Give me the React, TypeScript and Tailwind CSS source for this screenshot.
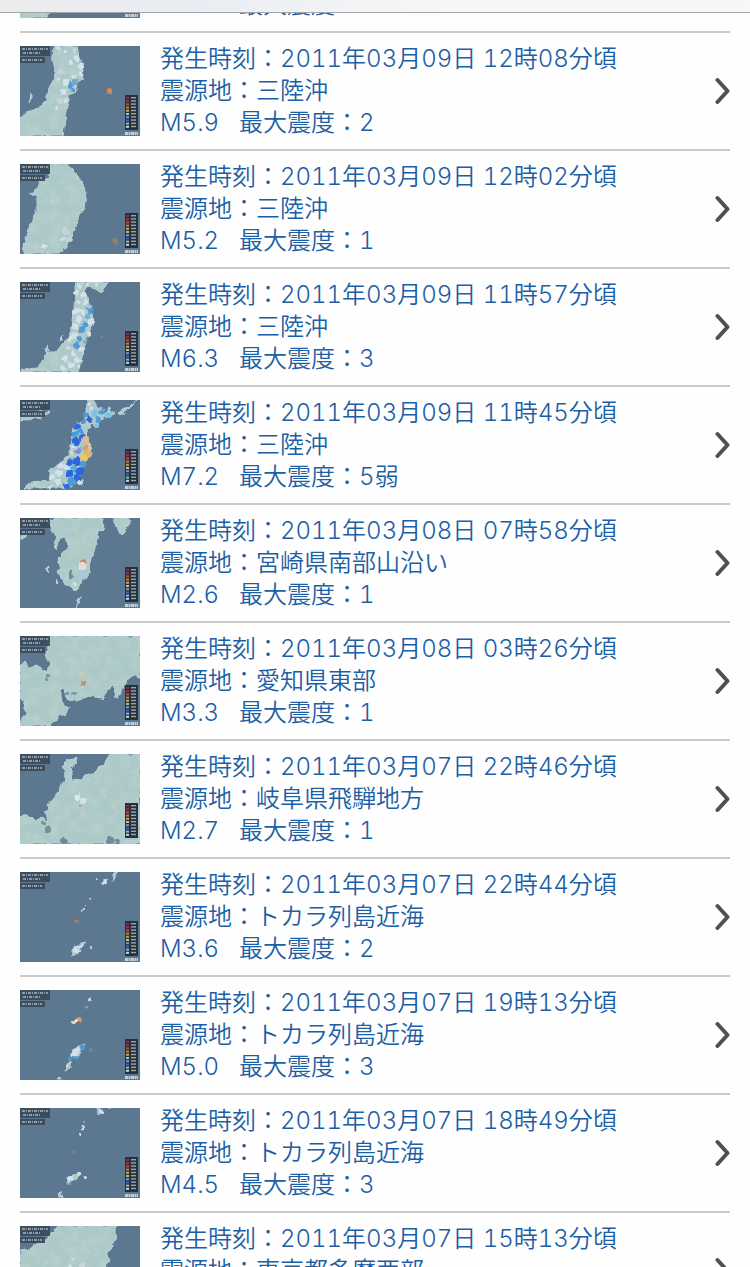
type Dot = [x: number, y: number, r: number, fill: string];

type Quake = {
    time: string;
    place: string;
    magnitude: string;
    intensity: string;
    land: string;
    dots: Dot[];
};

const PALE = "#d3e2ec";
const BLUE = "#4b9bd8";
const DEEP = "#2f66e0";
const SEA = "#7ba6c4";
const ORANGE = "#cf8a60";

const quakes: Quake[] = [
    {
        time: "2011年03月09日 12時19分頃",
        place: "三陸沖",
        magnitude: "M5.3",
        intensity: "1",
        land: "M40 0H64L66 20L56 46L44 62L32 76L26 90H0V70L20 58L32 40L36 18Z",
        dots: [[90, 48, 2, ORANGE]],
    },
    {
        time: "2011年03月09日 12時08分頃",
        place: "三陸沖",
        magnitude: "M5.9",
        intensity: "2",
        land: "M33 0H58L60 11L64 22L62 33L57 37L55 47L48 49L48 60L45 74L43 90H0V72L12 64L22 61L28 49L32 37L35 27L32 14Z M10 48L12 47L12 53L9 56Z",
        dots: [
            [38, 3, 2, PALE], [46, 6, 2, PALE], [54, 4, 2, PALE], [57, 12, 3, PALE], [50, 17, 2, PALE],
            [61, 20, 3, PALE], [60, 28, 3, PALE], [54, 30, 2, PALE], [41, 26, 3, "#c6d3d8"], [38, 34, 2, PALE],
            [46, 36, 3, PALE], [44, 46, 3, PALE], [40, 55, 3, "#c6d3d8"], [36, 62, 2, PALE], [45, 54, 2, PALE],
            [51, 39, 3, BLUE], [55, 36, 3, SEA], [53, 44, 2, BLUE], [89, 46, 3, ORANGE],
        ],
    },
    {
        time: "2011年03月09日 12時02分頃",
        place: "三陸沖",
        magnitude: "M5.2",
        intensity: "1",
        land: "M28 0H45L50 3L60 13L66 26L65 39L60 51L57 59L53 71L48 81L40 90H3L5 76L12 59L17 46L17 33L8 29L15 28L20 16L28 13Z",
        dots: [
            [46, 67, 4, "#c2d4d8"], [49, 76, 3, "#c2d4d8"], [43, 75, 2, PALE], [24, 82, 2, PALE],
            [32, 38, 1, PALE], [95, 77, 3, "#94806f"],
        ],
    },
    {
        time: "2011年03月09日 11時57分頃",
        place: "三陸沖",
        magnitude: "M6.3",
        intensity: "3",
        land: "M55 0H88L84 5L80 10L70 5L66 4L64 10L69 18L72 30L73 42L68 55L64 64L62 75L60 90H0L2 87L18 86L22 78L28 70L36 70L44 60L50 52L53 40L54 25L55 10Z M25 66L28 63L29 68L26 70Z M39 57L42 54L41 59Z",
        dots: [
            [60, 4, 2, PALE], [66, 2, 2, PALE], [76, 3, 2, PALE], [57, 10, 3, PALE], [64, 13, 3, PALE],
            [58, 20, 2, PALE], [66, 21, 3, PALE], [56, 29, 3, PALE], [62, 30, 3, PALE], [70, 28, 3, BLUE],
            [67, 34, 3, "#73b0cf"], [59, 37, 3, PALE], [55, 44, 3, PALE], [71, 40, 3, PALE], [65, 43, 3, BLUE],
            [61, 48, 3, BLUE], [69, 51, 2, PALE], [56, 54, 3, PALE], [50, 57, 3, PALE], [59, 57, 3, BLUE],
            [65, 60, 2, SEA], [57, 64, 3, BLUE], [49, 65, 2, PALE], [61, 67, 3, PALE], [53, 72, 3, PALE],
            [45, 76, 3, PALE], [57, 78, 3, PALE], [51, 83, 3, PALE], [43, 86, 2, PALE], [59, 85, 2, PALE],
            [82, 55, 1, "#8a8f99"],
        ],
    },
    {
        time: "2011年03月09日 11時45分頃",
        place: "三陸沖",
        magnitude: "M7.2",
        intensity: "5弱",
        land: "M66 0H73L76 6L82 9L90 8L94 14L86 18L80 22L76 28L70 22L66 34L71 45L68 58L62 65L60 80L50 88H4L12 82L30 80L30 69L36 66L42 62L50 50L52 40L54 26L66 18Z M98 13L118 0L112 6L100 15Z M0 14L29 11L20 18L0 21Z",
        dots: [
            [69, 4, 2, PALE], [72, 9, 2, PALE], [82, 12, 3, BLUE], [86, 10, 2, DEEP], [89, 15, 3, "#74c5ea"],
            [75, 14, 3, "#74c5ea"], [66, 15, 3, BLUE], [70, 19, 3, DEEP], [78, 20, 3, BLUE], [64, 22, 3, BLUE],
            [76, 26, 2, "#74c5ea"], [57, 27, 3, DEEP], [60, 31, 3, BLUE], [55, 34, 3, BLUE], [62, 37, 3, DEEP],
            [56, 41, 4, DEEP], [66, 40, 4, "#d8bd9a"], [69, 47, 4, "#dfc3a8"], [65, 48, 3, "#d9a06c"], [68, 54, 4, "#e0b56a"],
            [64, 57, 4, "#e6cc62"], [59, 51, 3, "#7c8edb"], [54, 47, 2, PALE], [52, 54, 2, PALE], [57, 61, 4, DEEP],
            [50, 62, 3, DEEP], [63, 64, 3, BLUE], [47, 67, 3, PALE], [54, 69, 4, "#58aede"], [60, 71, 4, DEEP],
            [49, 74, 4, DEEP], [57, 78, 4, DEEP], [52, 82, 4, BLUE], [47, 86, 3, DEEP], [60, 83, 3, PALE],
            [41, 66, 3, PALE], [39, 73, 3, PALE], [32, 77, 3, PALE], [38, 82, 3, PALE], [30, 87, 2, PALE],
            [77, 59, 1, "#74854a"],
        ],
    },
    {
        time: "2011年03月08日 07時58分頃",
        place: "宮崎県南部山沿い",
        magnitude: "M2.6",
        intensity: "1",
        land: "M28 5L33 0H82L83 12L78 16L75 30L70 48L68 58L62 62L58 70L53 74L50 68L44 64L38 56L40 48L38 40L44 34L48 28L46 18L40 22L36 32L34 26L36 16L32 14Z M94 0H111L106 10L102 18L96 10Z M57 90L57 82L60 78L60 84Z M0 18L7 17L4 21L0 21Z M26 52L29 50L28 54Z M36 61L38 65L36 66Z",
        dots: [
            [50, 55, 2, "#668aa0"], [51, 59, 2, "#668aa0"], [62, 48, 4, "#dbe0dc"], [63, 43, 2, ORANGE], [65, 46, 2, "#e5b282"],
            [64, 57, 4, "#a8c8d9"], [55, 66, 2, PALE],
        ],
    },
    {
        time: "2011年03月08日 03時26分頃",
        place: "愛知県東部",
        magnitude: "M3.3",
        intensity: "1",
        land: "M28 0H120V42L112 40L107 44L104 52L98 62L94 60L96 52L91 49L88 54L82 62L70 60L56 64L46 62L44 52L40 54L42 66L48 72L46 78L38 80L32 88L30 90H0V86L6 78L4 66L0 60V30L4 26L8 32L18 30L28 36L30 26L26 18Z",
        dots: [
            [29, 40, 2, "#7390a0"], [27, 44, 2, "#7390a0"], [62, 38, 3, "#c8c7be"], [61, 50, 3, "#bfcbc8"],
            [63, 48, 2, ORANGE], [47, 57, 2, "#7893a4"], [54, 58, 2, "#7893a4"],
        ],
    },
    {
        time: "2011年03月07日 22時46分頃",
        place: "岐阜県飛騨地方",
        magnitude: "M2.7",
        intensity: "1",
        land: "M91 0H120V90H0V62L8 60L14 66L24 64L28 68L26 58L30 48L38 38L44 28L46 20L42 12L48 6L58 4L56 10L50 14L52 25L62 26L66 21L76 18L84 8Z",
        dots: [
            [28, 75, 3, "#7390a0"], [24, 70, 2, "#7390a0"], [44, 87, 3, "#6d8b9c"], [90, 86, 4, "#6d8b9c"],
            [97, 88, 3, "#6d8b9c"], [58, 43, 3, "#e4eaec"], [63, 47, 3, PALE], [61, 52, 1, ORANGE], [60, 39, 1, PALE],
        ],
    },
    {
        time: "2011年03月07日 22時44分頃",
        place: "トカラ列島近海",
        magnitude: "M3.6",
        intensity: "2",
        land: "M51 83L53 76L60 72L66 71L61 76L57 83Z M93 9L95 0H98L96 7Z",
        dots: [
            [84, 10, 3, PALE], [77, 7, 1, PALE], [69, 26, 1, PALE], [65, 33, 1, PALE], [63, 38, 1, PALE],
            [57, 49, 2, "#a17d70"], [56, 78, 3, PALE], [60, 74, 2, PALE], [71, 75, 1, PALE],
        ],
    },
    {
        time: "2011年03月07日 19時13分頃",
        place: "トカラ列島近海",
        magnitude: "M5.0",
        intensity: "3",
        land: "M51 66L53 60L60 56L66 53L61 61L57 68Z M45 81L46 74L50 72L50 79Z M38 90L41 87L42 90Z",
        dots: [
            [70, 10, 2, PALE], [66, 18, 1, "#85a9c5"], [54, 32, 2, "#ead9cb"], [58, 30, 3, "#db9869"], [56, 31, 1, "#fff"],
            [63, 57, 3, BLUE], [71, 60, 2, "#4e96bd"], [58, 60, 2, PALE], [55, 63, 3, PALE], [57, 67, 2, BLUE], [50, 69, 2, BLUE],
            [53, 68, 2, "#4e96bd"], [47, 76, 1, PALE],
        ],
    },
    {
        time: "2011年03月07日 18時49分頃",
        place: "トカラ列島近海",
        magnitude: "M4.5",
        intensity: "3",
        land: "M46 75L48 70L56 66L60 63L61 66L52 74Z M38 85L41 84L43 90H40Z",
        dots: [
            [79, 3, 3, "#a9c3d5"], [82, 4, 2, PALE], [89, 0, 2, PALE], [63, 20, 2, PALE], [64, 15, 1, "#8facbf"],
            [59, 27, 2, PALE], [54, 44, 1, "#80918a"], [50, 71, 3, PALE], [59, 65, 2, PALE], [65, 70, 2, PALE],
            [49, 76, 2, SEA],
        ],
    },
    {
        time: "2011年03月07日 15時13分頃",
        place: "東京都多摩西部",
        magnitude: "M2.8",
        intensity: "1",
        land: "M38 0H97L95 14L90 22L86 42L80 60L70 90H0V24L12 22L28 10Z",
        dots: [[53, 33, 2, "#cbdcda"], [62, 40, 3, "#c7d6d8"], [50, 40, 2, PALE]],
    },
];

const LEGEND = ["#7b2a5c", "#a52a3c", "#c4473a", "#c77a3e", "#c9a14a", "#c8c07a", "#6f9fd0", "#3d66c8", "#8fb7cc", "#c8d6dc"];

function MapFilters() {
    return (
        <svg className="absolute size-0" aria-hidden="true">
            {/* ragged coastline */}
            <filter id="coast" x="0" y="0" width="120" height="90" filterUnits="userSpaceOnUse">
                <feTurbulence type="fractalNoise" baseFrequency=".16" numOctaves="2" seed="4" result="noise" />
                <feDisplacementMap in="SourceGraphic" in2="noise" scale="6" xChannelSelector="R" yChannelSelector="G" />
            </filter>
            {/* mountain relief, kept inside the land shape */}
            <filter id="relief" x="0" y="0" width="120" height="90" filterUnits="userSpaceOnUse">
                <feTurbulence type="fractalNoise" baseFrequency=".1" numOctaves="3" seed="9" />
                <feColorMatrix values="0 0 0 0 .5  0 0 0 0 .64  0 0 0 0 .62  1.8 0 0 0 -.75" result="shade" />
                <feComposite in="shade" in2="SourceGraphic" operator="in" />
            </filter>
        </svg>
    );
}

function MapThumb({ land, dots }: Pick<Quake, "land" | "dots">) {
    return (
        <svg viewBox="0 0 120 90" className="h-[90px] w-[120px] shrink-0" aria-hidden="true">
            <rect width="120" height="90" fill="#5b7890" />
            <g filter="url(#coast)">
                <path d={land} fill="#acc9c8" stroke="#b9d0d8" strokeLinejoin="round" />
                <path d={land} filter="url(#relief)" />
                {dots.map(([x, y, r, fill], i) => (
                    <circle key={i} cx={x} cy={y} r={r} fill={fill} />
                ))}
            </g>
            {/* date caption */}
            <path d="M0 0H30V10H0Z M0 11H25V17H0Z" fill="#384858" fillOpacity=".9" />
            <path d="M2 3H28M3 7H20M2 14H22" stroke="#8d9aa5" strokeWidth="2" strokeDasharray="3 1 1 1" />
            {/* intensity scale */}
            <rect x="105" y="49" width="13" height="35" fill="#26313c" />
            {LEGEND.map((fill, i) => (
                <g key={fill}>
                    <rect x="106" y={51 + i * 3.2} width="3" height="2" fill={fill} />
                    <rect x="111" y={51 + i * 3.2} width="5" height="1.4" fill="#9aa5ad" />
                </g>
            ))}
            <path d="M105 87.5H118" stroke="#c3ced6" strokeWidth="3" strokeDasharray="3 .5 2 .5" />
        </svg>
    );
}

function QuakeRow({ quake }: { quake: Quake }) {
    return (
        <li className="border-b-2 border-[#cacaca]">
            <a href="#" className="flex items-center gap-5 py-[10px] text-[#1c5fa5]">
                <MapThumb land={quake.land} dots={quake.dots} />
                <div className="min-w-0 flex-1 text-2xl leading-8">
                    <p>発生時刻：{quake.time}</p>
                    <p>震源地：{quake.place}</p>
                    <p className="flex gap-5">
                        <span>{quake.magnitude}</span>
                        <span>最大震度：{quake.intensity}</span>
                    </p>
                </div>
                <svg viewBox="0 0 15 28" className="h-7 w-[15px] shrink-0" aria-hidden="true">
                    <path d="M2.5 3L12.5 14L2.5 25" fill="none" stroke="#505050" strokeWidth="4" strokeLinecap="round" strokeLinejoin="round" />
                </svg>
            </a>
        </li>
    );
}

export default function App() {
    return (
        <div
            lang="ja"
            className="h-screen overflow-hidden bg-[#fefefe] font-['Inter','Noto_Sans_CJK_JP',sans-serif] font-[350] tabular-nums"
        >
            <MapFilters />
            <header className="fixed inset-x-0 top-0 h-[13px] border-b border-[#a3a3a8] bg-linear-to-r from-[#ececec] via-[#e9edf3] via-25% to-[#f7f7f7] to-60%" />
            <ul className="-mt-[85px] px-5">
                {quakes.map((quake) => (
                    <QuakeRow key={quake.time} quake={quake} />
                ))}
            </ul>
        </div>
    );
}
